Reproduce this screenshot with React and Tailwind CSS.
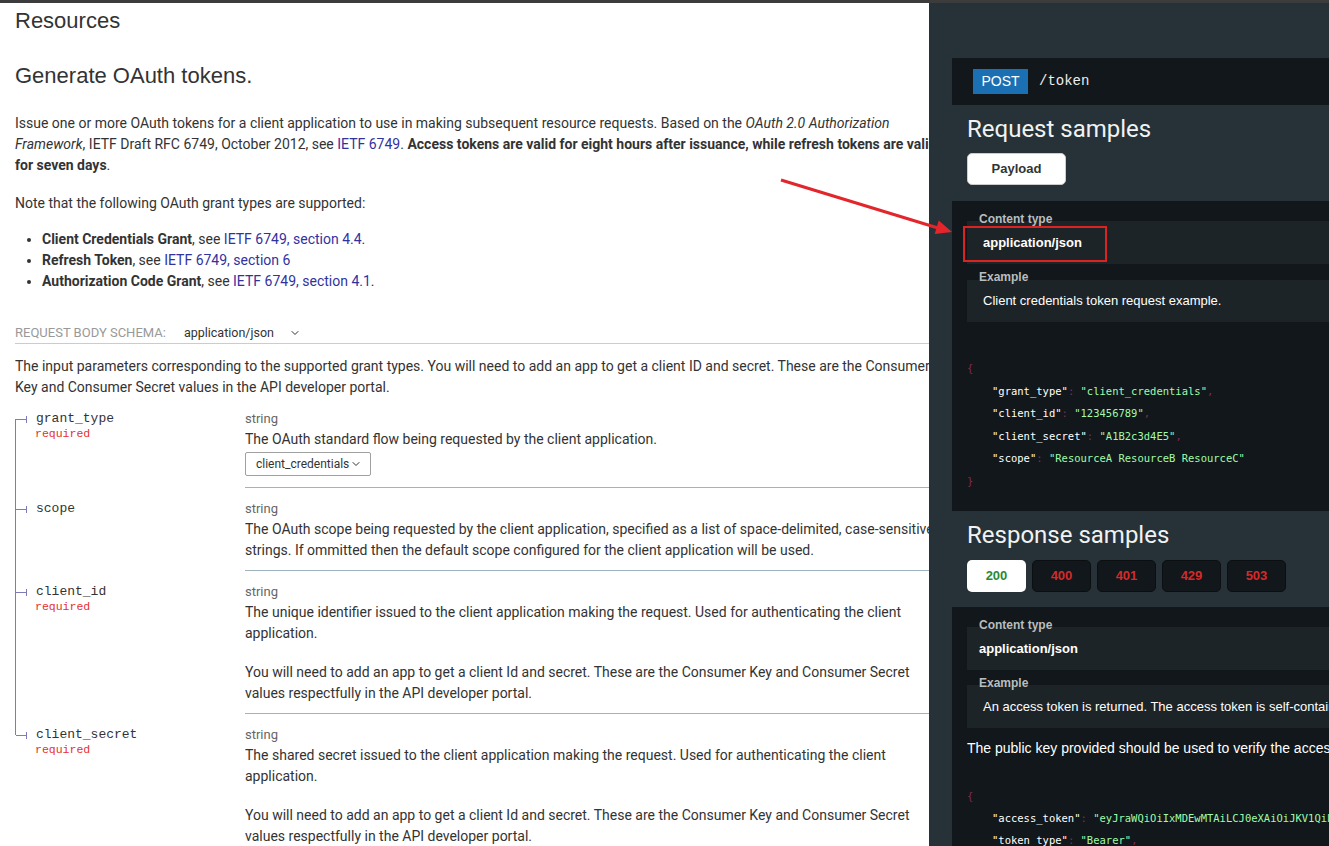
import { ChevronDown } from "lucide-react";

const TREE = "bg-[#7c7cbb]";

const params = [
  {
    name: "grant_type",
    required: true,
    desc: ["The OAuth standard flow being requested by the client application."],
    dropdown: "client_credentials",
  },
  {
    name: "scope",
    required: false,
    desc: [
      "The OAuth scope being requested by the client application, specified as a list of space-delimited, case-sensitive strings. If ommitted then the default scope configured for the client application will be used.",
    ],
  },
  {
    name: "client_id",
    required: true,
    desc: [
      ["The unique identifier issued to the client application making the request. Used for authenticating the client", "application."],
      ["You will need to add an app to get a client Id and secret. These are the Consumer Key and Consumer Secret", "values respectfully in the API developer portal."],
    ],
  },
  {
    name: "client_secret",
    required: true,
    desc: [
      ["The shared secret issued to the client application making the request. Used for authenticating the client", "application."],
      ["You will need to add an app to get a client Id and secret. These are the Consumer Key and Consumer Secret", "values respectfully in the API developer portal."],
    ],
  },
];

function ParamRow({ p, first, last }) {
  return (
    <div className="flex">
      <div className="w-[230px] shrink-0 flex">
        <div className="w-px flex flex-col">
          <div className={`h-[21px] ${first ? "" : TREE}`} />
          <div className={`flex-1 ${last ? "" : TREE}`} />
        </div>
        <div className="pt-[11px]">
          <div className="flex items-center h-[20px]">
            <span className={`w-[10px] h-px ${TREE}`} />
            <span className={`w-px h-[7px] ${TREE}`} />
            <span className="ml-[9px] font-['Liberation_Mono',monospace] text-[13px] text-[#333]">{p.name}</span>
          </div>
          {p.required && (
            <div className="ml-[19px] font-['Liberation_Mono',monospace] text-[11.5px] leading-[10px] text-[#e53030]">
              required
            </div>
          )}
        </div>
      </div>
      <div className={`flex-1 pt-[10px] ${p.dropdown ? "pb-[11px]" : "pb-[9px]"} ${last ? "" : "border-b border-[#9fb4be]"}`}>
        <div className="text-[13px] leading-[21px] text-[#666]">string</div>
        {p.desc.map((d, i) => (
          <p key={i} className={`text-[14px] leading-[21px] text-[#333] ${i > 0 ? "mt-[18px]" : ""}`}>
            {Array.isArray(d) ? (
              <>
                {d[0]}
                <br />
                {d[1]}
              </>
            ) : (
              d
            )}
          </p>
        ))}
        {p.dropdown && (
          <div className="mt-[2px] w-[126px] h-[24px] border border-[#a0a0a0] rounded-[2px] flex items-center pl-[10px] text-[12px] text-[#333]">
            {p.dropdown}
            <ChevronDown size={12} strokeWidth={2} className="ml-[1px]" />
          </div>
        )}
      </div>
    </div>
  );
}

const P = ({ children }) => <span className="text-[#822a52]">{children}</span>;
const K = ({ children }) => <span className="text-white">{children}</span>;
const S = ({ children }) => <span className="text-[#a0fbaa]">{children}</span>;

function Line({ k, v, comma = true }) {
  return (
    <div className="pl-[25px]">
      <K>"{k}"</K>
      <P>: </P>
      <S>"{v}"</S>
      {comma && <P>,</P>}
    </div>
  );
}

function Label({ children }) {
  return (
    <div className="relative z-10 pl-[12px] text-[12px] leading-[14px] font-bold text-[#b9bdbf]">{children}</div>
  );
}

export default function App() {
  return (
    <div className="relative w-[1329px] h-[846px] overflow-hidden flex flex-col bg-white font-['Roboto',sans-serif]">
      <div className="h-[3px] bg-[#3c3c3c] shrink-0" />
      <div className="flex flex-1 min-h-0">
        {/* left documentation column */}
        <div className="w-[929px] shrink-0 overflow-hidden">
          <div className="w-[930px] ml-[15px] text-[#333]">
            <h1 className="mt-[4px] font-['Liberation_Sans',sans-serif] text-[22px] leading-[28px] text-[#333]">Resources</h1>
            <h2 className="mt-[27px] font-['Liberation_Sans',sans-serif] text-[22px] leading-[28px] text-[#333]">
              Generate OAuth tokens.
            </h2>
            <p className="mt-[23px] text-[14px] leading-[21px]">
              Issue one or more OAuth tokens for a client application to use in making subsequent resource requests. Based on
              the <em>OAuth 2.0 Authorization Framework</em>, IETF Draft RFC 6749, October 2012, see{" "}
              <a className="text-[#32329f]">IETF 6749</a>.{" "}
              <strong>Access tokens are valid for eight hours after issuance, while refresh tokens are valid for seven days</strong>.
            </p>
            <p className="mt-[17px] text-[14px] leading-[21px]">Note that the following OAuth grant types are supported:</p>
            <ul className="mt-[15px] list-disc pl-[27px] text-[14px] leading-[21px]">
              <li>
                <strong>Client Credentials Grant</strong>, see <a className="text-[#32329f]">IETF 6749, section 4.4</a>.
              </li>
              <li>
                <strong>Refresh Token</strong>, see <a className="text-[#32329f]">IETF 6749, section 6</a>
              </li>
              <li>
                <strong>Authorization Code Grant</strong>, see <a className="text-[#32329f]">IETF 6749, section 4.1</a>.
              </li>
            </ul>
            <div className="mt-[31px] h-[21px] flex items-center border-b border-[#cccccc]">
              <span className="text-[13px] uppercase text-[#999]">Request Body schema:</span>
              <span className="ml-[18px] text-[12.5px] text-[#333]">application/json</span>
              <ChevronDown size={12} strokeWidth={2} className="ml-[15px] text-[#333]" />
            </div>
            <p className="mt-[12px] text-[14px] leading-[21px]">
              The input parameters corresponding to the supported grant types. You will need to add an app to get a client ID
              and secret. These are the Consumer Key and Consumer Secret values in the API developer portal.
            </p>
            <div>
              {params.map((p, i) => (
                <ParamRow key={p.name} p={p} first={i === 0} last={i === params.length - 1} />
              ))}
            </div>
          </div>
        </div>

        {/* right samples column */}
        <div className="flex-1 bg-[#263238] overflow-hidden">
          <div className="w-[760px] pl-[23px] font-['Liberation_Sans',sans-serif]">
            <div className="mt-[55px] h-[47px] bg-[#11171a] flex items-center pl-[21px]">
              <span className="w-[55px] h-[25px] bg-[#1b6fb3] text-white text-[14px] flex items-center justify-center">POST</span>
              <span className="ml-[11px] font-['Liberation_Mono',monospace] text-[14px] text-[#eee]">/token</span>
            </div>

            <h3 className="mt-[9px] ml-[15px] font-['Roboto',sans-serif] text-[24px] leading-[30px] text-[#f2f2f2]">Request samples</h3>
            <div className="mt-[9px] ml-[15px] w-[99px] h-[32px] bg-white rounded-[5px] border border-[#ccc] flex items-center justify-center text-[13px] font-bold text-[#333]">
              Payload
            </div>

            <div className="mt-[16px] bg-[#11171a] pl-[15px] pt-[11px] pb-[19px]">
              <Label>Content type</Label>
              <div className="-mt-[5px] h-[43px] bg-[#1d2428] flex items-center pl-[16px] text-[13px] font-bold text-white">
                application/json
              </div>
              <div className="mt-[6px]">
                <Label>Example</Label>
              </div>
              <div className="-mt-[4px] h-[42px] bg-[#1d2428] flex items-center pl-[16px] text-[13px] text-white">
                Client credentials token request example.
              </div>
              <div className="mt-[35px] font-['DejaVu_Sans_Mono',monospace] text-[10.5px] leading-[22.5px]">
                <div>
                  <P>{"{"}</P>
                </div>
                <Line k="grant_type" v="client_credentials" />
                <Line k="client_id" v="123456789" />
                <Line k="client_secret" v="A1B2c3d4E5" />
                <Line k="scope" v="ResourceA ResourceB ResourceC" comma={false} />
                <div>
                  <P>{"}"}</P>
                </div>
              </div>
            </div>

            <h3 className="mt-[9px] ml-[15px] font-['Roboto',sans-serif] text-[24px] leading-[30px] text-[#f2f2f2]">Response samples</h3>
            <div className="mt-[10px] ml-[15px] flex gap-[6px]">
              <div className="w-[59px] h-[32px] bg-white rounded-[5px] flex items-center justify-center text-[13px] font-bold text-[#2a8a32]">
                200
              </div>
              {["400", "401", "429", "503"].map((c) => (
                <div
                  key={c}
                  className="w-[59px] h-[32px] bg-[#11171a] border border-[#0b0f11] rounded-[5px] flex items-center justify-center text-[13px] font-bold text-[#d42a2a]"
                >
                  {c}
                </div>
              ))}
            </div>

            <div className="mt-[15px] bg-[#11171a] pl-[15px] pt-[11px] pb-[20px]">
              <Label>Content type</Label>
              <div className="-mt-[5px] h-[43px] bg-[#1d2428] flex items-center pl-[12px] text-[13px] font-bold text-white">
                application/json
              </div>
              <div className="mt-[6px]">
                <Label>Example</Label>
              </div>
              <div className="-mt-[5px] h-[43px] bg-[#1d2428] flex items-center pl-[16px] text-[13px] text-white whitespace-nowrap">
                An access token is returned. The access token is self-contained and expires after eight hours.
              </div>
              <p className="mt-[10px] text-[14px] leading-[21px] text-white whitespace-nowrap">
                The public key provided should be used to verify the access token signature before use.
              </p>
              <div className="mt-[26px] font-['DejaVu_Sans_Mono',monospace] text-[10.5px] leading-[22px] whitespace-nowrap">
                <div>
                  <P>{"{"}</P>
                </div>
                <Line k="access_token" v="eyJraWQiOiIxMDEwMTAiLCJ0eXAiOiJKV1QiLCJhbGciOiJSUzI1NiJ9.eyJzdWIiOiIxMjM0NTY3ODkifQ" />
                <Line k="token_type" v="Bearer" />
                <Line k="expires_in" v="28800" />
              </div>
            </div>
          </div>
        </div>
      </div>

      {/* red annotation overlay */}
      <div className="absolute left-[963px] top-[226px] w-[144px] h-[36px] border-2 border-[#dc2323] pointer-events-none" />
      <svg className="absolute left-0 top-0 pointer-events-none" width="1329" height="846">
        <line x1="781" y1="180" x2="938" y2="228" stroke="#e3262b" strokeWidth="3" />
        <polygon points="952,232 934.7,234 938.7,220.6" fill="#e3262b" />
      </svg>
    </div>
  );
}
